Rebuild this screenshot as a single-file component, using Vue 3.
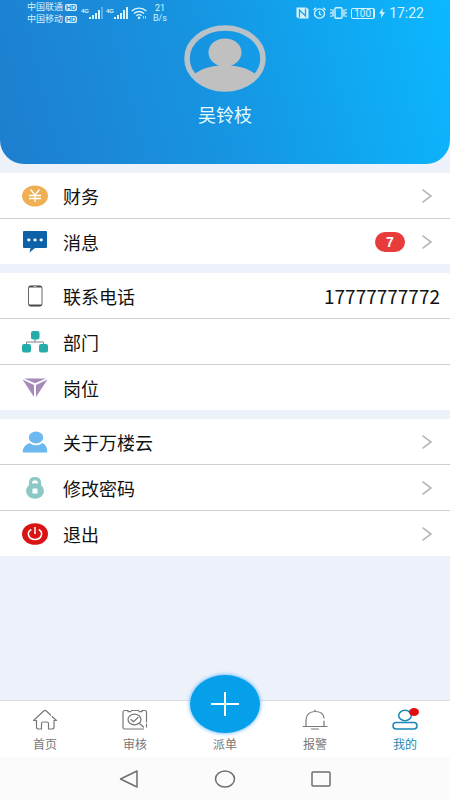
<script setup>
import { ref } from 'vue'

const carriers = ['中国联通', '中国移动']

const groups = [
  [
    { icon: 'money', label: '财务', link: true },
    { icon: 'message', label: '消息', link: true, badge: 7 },
  ],
  [
    { icon: 'phone', label: '联系电话', value: '17777777772' },
    { icon: 'department', label: '部门' },
    { icon: 'post', label: '岗位' },
  ],
  [
    { icon: 'about', label: '关于万楼云', link: true },
    { icon: 'lock', label: '修改密码', link: true },
    { icon: 'power', label: '退出', link: true },
  ],
]

const tabs = [
  { id: 'home', label: '首页' },
  { id: 'audit', label: '审核' },
  { id: 'dispatch', label: '派单' },
  { id: 'alarm', label: '报警' },
  { id: 'mine', label: '我的' },
]

const active = ref('mine')
</script>

<template>
  <div class="page">
    <header class="hero">
      <div class="status">
        <div class="carriers">
          <div v-for="name in carriers" :key="name" class="carrier">
            <span>{{ name }}</span><b class="hd">HD</b>
          </div>
        </div>
        <div v-for="n in 2" :key="n" class="signal">
          <span class="net">4G</span>
          <svg width="14" height="12" viewBox="0 0 14 12" fill="currentColor" aria-hidden="true">
            <path d="M0 10h2v2H0zM3 8h2v4H3zM6 6h2v6H6zM9 3h2v9H9z" />
            <path d="M12 0h2v12h-2z" :opacity="n === 1 ? 0.35 : 1" />
          </svg>
        </div>
        <svg class="wifi" width="16" height="12" viewBox="0 0 16 12" fill="none" stroke="currentColor" stroke-width="1.4" aria-hidden="true">
          <path d="M.7 4C4.800.2 11.200.2 15.300 4M3 6.500c2.900-2.600 7.100-2.600 10 0M5.300 8.800c1.600-1.400 3.800-1.400 5.400 0" />
          <circle cx="8" cy="10.800" r=".6" fill="currentColor" />
          <path d="M12.500 9v2.500M14.500 9v2.500" stroke-width=".8" />
        </svg>
        <div class="speed"><span>21</span><span>B/s</span></div>
        <div class="status-right">
          <svg width="13" height="12" viewBox="0 0 13 12" aria-hidden="true">
            <path d="M1.500.5H10L12.500 2v9.500H3L.5 10V.5z" fill="currentColor" />
            <path d="M3.500 10.500V3l6 6V1.500" fill="none" stroke="#19a2ec" stroke-width="1.300" />
          </svg>
          <svg width="13" height="12" viewBox="0 0 13 12" fill="none" stroke="currentColor" stroke-width="1.300" aria-hidden="true">
            <ellipse cx="6.500" cy="6.500" rx="5" ry="4.600" />
            <path d="M6.500 4v3l2 1M.5 3 3 .8M12.500 3 10 .8" />
          </svg>
          <svg width="17" height="12" viewBox="0 0 17 12" fill="none" stroke="currentColor" stroke-width="1.400" aria-hidden="true">
            <rect x="5" y=".8" width="7" height="10.400" rx="1" />
            <path d="M3 2.500v7M14 2.500v7" />
            <path d="M1 2v1.500M1 5v2M1 8.500V10M16 2v1.500M16 5v2M16 8.500V10" />
          </svg>
          <span class="battery">100</span>
          <svg width="6" height="10" viewBox="0 0 6 10" fill="currentColor" aria-hidden="true">
            <path d="M3.800 0 0 5.600h2.400L2 10l4-5.800H3.400z" />
          </svg>
          <time>17:22</time>
        </div>
      </div>
      <svg class="avatar" width="82" height="67" viewBox="0 0 82 67" aria-hidden="true">
        <ellipse cx="41" cy="33.500" rx="38" ry="30.500" fill="none" stroke="#b9c2c8" stroke-width="5.500" />
        <ellipse cx="41" cy="27.500" rx="16.500" ry="14" fill="#c0c0c0" />
        <path d="M35 36h12v4.500c11 1 19 4 25 9C66 60 54.500 66 41 66S16 60 10 49.500C16 44.500 24 41.500 35 40.500z" fill="#c0c0c0" />
      </svg>
      <h1 class="name">吴铃枝</h1>
    </header>

    <main class="groups">
      <section v-for="(rows, g) in groups" :key="g" class="group">
        <component
          :is="row.link ? 'button' : 'div'"
          v-for="row in rows"
          :key="row.label"
          :type="row.link ? 'button' : undefined"
          class="row"
        >
          <svg class="row-icon" width="26" height="22" viewBox="0 0 26 22" aria-hidden="true">
            <g v-if="row.icon === 'money'">
              <ellipse cx="13" cy="11" rx="13" ry="10.500" fill="#efb055" />
              <path d="M8.500 4.500 13 10l4.500-5.500M13 10v7M7 10.500h12M7 13.500h12" fill="none" stroke="#fff" stroke-width="1.300" />
            </g>
            <g v-else-if="row.icon === 'message'">
              <path d="M2 0h22q1 0 1 1v15q0 1-1 1H13l-5.500 4.500L8.500 17H2q-1 0-1-1V1q0-1 1-1z" fill="#0d61a9" />
              <g fill="#fff"><ellipse cx="6.800" cy="9" rx="1.700" ry="1.400" /><ellipse cx="13" cy="9" rx="1.700" ry="1.400" /><ellipse cx="19.200" cy="9" rx="1.700" ry="1.400" /></g>
            </g>
            <g v-else-if="row.icon === 'phone'">
              <rect x="6.500" y="1" width="13.500" height="20" rx="2" fill="#fff" stroke="#65666b" />
              <path d="M6.500 2.500Q6.500.800 8 .800h10.500Q20 .800 20 2.500zM6.500 19.500h13.500Q20 21.300 18 21.300H8.500q-2 0-2-1.800z" fill="#4c4d52" />
              <path d="M11.500 1.700h3" stroke="#ddd" stroke-width=".8" />
            </g>
            <g v-else-if="row.icon === 'department'">
              <path d="M13 8v3M4.500 14v-3h17v3" fill="none" stroke="#77888a" />
              <g fill="#25aca8"><rect x="9" y="0" width="8.500" height="8.500" rx="2" /><rect x="0" y="13" width="9" height="8.500" rx="2" /><rect x="17" y="13" width="9" height="8.500" rx="2" /></g>
            </g>
            <g v-else-if="row.icon === 'post'" fill="#a58abb">
              <path d="M2 1.500h22L13 6.200z" />
              <path d="M.5 2.500 12 8v12z" />
              <path d="M25.500 2.500 14 8v12z" />
            </g>
            <g v-else-if="row.icon === 'about'" fill="#6bb9ee">
              <ellipse cx="14" cy="6.500" rx="7.200" ry="6" />
              <path d="M.7 21.500c0-4 1.800-7.800 7-9.500 3.300 3 9.300 3 12.600 0 4.200 1.700 5 5.500 5 9.500z" />
            </g>
            <g v-else-if="row.icon === 'lock'">
              <path d="M8.500 9V6c0-3 1.800-4.300 4.500-4.300S17.500 3 17.500 6v3" fill="none" stroke="#8cc8c5" stroke-width="3.200" />
              <ellipse cx="13" cy="14" rx="9" ry="7.700" fill="#8cc8c5" />
              <path d="M11.500 11.500h3q1 0 1 1v4h-5v-4q0-1 1-1z" fill="#fff" />
            </g>
            <g v-else>
              <ellipse cx="13" cy="11" rx="13" ry="10.800" fill="#d91414" />
              <path d="M9.300 6.500C4 9.500 6.500 16.500 13 16.500S22 9.500 16.700 6.500M13 4v7" fill="none" stroke="#fff" stroke-width="1.500" />
            </g>
          </svg>
          <span class="label">{{ row.label }}</span>
          <span v-if="row.badge" class="badge">{{ row.badge }}</span>
          <span v-if="row.value" class="value">{{ row.value }}</span>
          <svg v-if="row.link" class="chevron" width="10" height="14" viewBox="0 0 10 14" fill="none" stroke="#b5b5b5" stroke-width="1.600" aria-hidden="true">
            <path d="M.5.700 9 7 .5 13.300" />
          </svg>
        </component>
      </section>
    </main>

    <nav class="tabs">
      <button
        v-for="tab in tabs"
        :key="tab.id"
        type="button"
        class="tab"
        :class="{ active: active === tab.id }"
        @click="active = tab.id"
      >
        <span v-if="tab.id === 'dispatch'" class="plus">
          <svg width="28" height="24" viewBox="0 0 28 24" stroke="#fff" stroke-width="2" aria-hidden="true">
            <path d="M0 12h28M14 0v24" />
          </svg>
        </span>
        <svg class="tab-icon" width="26" height="22" viewBox="0 0 26 22" fill="none" stroke="currentColor" stroke-width="1.200" stroke-linecap="round" stroke-linejoin="round" aria-hidden="true">
          <path v-if="tab.id === 'home'" d="M4.500 11.500H1.500L12 1.800q1-.8 2 0L18.500 6M20 7.500l4.500 4H22V18q0 2-2 2h-3.500v-5.500q0-1.500-1.500-1.500h-4q-1.500 0-1.500 1.500V20H6.500q-2 0-2-2V11.500" />
          <g v-else-if="tab.id === 'audit'">
            <path d="M6 1.500H2.500Q1 1.500 1 3v15.500Q1 20 2.500 20h19M6 1.500v1.200h3M9.500 1.500h7M20 1.500h3q1.500 0 1.500 1.500v10M20 1.500v1.200h-3M24.500 15v3" />
            <ellipse cx="12.500" cy="10.500" rx="6.500" ry="5.300" />
            <path d="m9 10.500 2.500 2.300L16 8.500M17.500 14.500l4 3.500" />
          </g>
          <g v-else-if="tab.id === 'alarm'">
            <path d="M1 17.500h24M4 17.500V11c0-5 3.500-8.500 9-8.500 5 0 8.500 2.500 9 6.500M22 12v5.500M13 1v1.500M9.500 20h7" />
          </g>
          <g v-else-if="tab.id === 'mine'" stroke-width="1.500">
            <ellipse cx="13" cy="6.500" rx="6.300" ry="5.200" />
            <rect x="1" y="13.500" width="24" height="6.500" rx="3.200" />
          </g>
        </svg>
        <span v-if="tab.id === 'mine'" class="dot"></span>
        <span class="tab-label">{{ tab.label }}</span>
      </button>
    </nav>

    <div class="system">
      <button type="button" aria-label="返回">
        <svg width="20" height="18" viewBox="0 0 20 18"><path d="M1.500 9 18 1v16z" /></svg>
      </button>
      <button type="button" aria-label="主屏幕">
        <svg width="22" height="18" viewBox="0 0 22 18"><ellipse cx="11" cy="9" rx="9.500" ry="8" /></svg>
      </button>
      <button type="button" aria-label="最近任务">
        <svg width="20" height="18" viewBox="0 0 20 18"><rect x="1" y="2" width="18" height="14" rx="1" /></svg>
      </button>
    </div>
  </div>
</template>

<style>
body {
  margin: 0;
}
</style>

<style scoped>
.page {
  display: flex;
  flex-direction: column;
  min-height: 100vh;
  background: #edf2fa;
  color: #111;
  font-family: "Noto Sans CJK SC", sans-serif;
}

button {
  margin: 0;
  padding: 0;
  border: 0;
  background: none;
  color: inherit;
  font: inherit;
}

svg {
  display: block;
  flex: none;
}

.hero {
  display: flex;
  flex-direction: column;
  align-items: center;
  box-sizing: border-box;
  height: 164px;
  border-radius: 0 0 24px 24px;
  background: linear-gradient(75deg, #1e7ecf 0%, #1793e0 45%, #0bb8ff 100%);
  color: #e6fbff;
}

.status {
  display: flex;
  align-items: center;
  align-self: stretch;
  box-sizing: border-box;
  height: 26px;
  padding: 0 26px 0 27px;
  color: #d5f3fb;
}

.carriers {
  width: 54px;
}

.carrier {
  display: flex;
  align-items: center;
  gap: 2px;
  font-size: 9px;
  line-height: 12px;
  white-space: nowrap;
}

.hd {
  padding: 0 1px;
  border-radius: 2px;
  background: #d5f3fb;
  color: #1f87d6;
  font: bold 7px/7px "Liberation Sans", sans-serif;
}

.signal {
  display: flex;
  width: 25px;
}

.net {
  font: bold 6px/8px "Liberation Sans", sans-serif;
}

.wifi {
  margin-right: 6px;
}

.speed {
  display: flex;
  flex-direction: column;
  align-items: center;
  font: 9px/10px Roboto, sans-serif;
}

.status-right {
  display: flex;
  align-items: center;
  gap: 4px;
  margin-left: auto;
}

.battery {
  padding: 0 2px;
  border: 1px solid currentColor;
  border-right-width: 2px;
  border-radius: 2px;
  font: 10px/9px Roboto, sans-serif;
}

time {
  font: 14px/16px Roboto, sans-serif;
}

.avatar {
  margin-top: -1px;
}

.name {
  margin: 10px 0 0;
  font-size: 18px;
  font-weight: 400;
  line-height: 24px;
}

.groups {
  display: flex;
  flex: 1;
  flex-direction: column;
  gap: 9px;
  padding: 9px 0 40px;
}

.group {
  background: #fff;
}

.row {
  display: flex;
  align-items: center;
  box-sizing: border-box;
  width: 100%;
  height: 45px;
  padding: 0 10px 0 22px;
  text-align: left;
}

.row + .row {
  height: 46px;
  border-top: 1px solid #cfcfcf;
}

.label {
  flex: 1;
  margin-left: 15px;
  font-size: 18px;
  line-height: 24px;
}

.badge {
  width: 30px;
  border-radius: 10px;
  background: #e83c3c;
  color: #fff;
  font: bold 14px/20px "Liberation Sans", sans-serif;
  text-align: center;
}

.value {
  font-size: 19px;
  line-height: 24px;
}

.chevron {
  margin: 0 8px 0 17px;
}

.tabs {
  display: grid;
  grid-template-columns: repeat(5, 1fr);
  height: 56px;
  border-top: 1px solid #dedede;
  background: #fff;
  color: #777;
}

.tab {
  position: relative;
  display: flex;
  flex-direction: column;
  align-items: center;
  padding-top: 8px;
}

.tab.active {
  color: #1a87b5;
}

.tab-label {
  margin-top: 5px;
  font-size: 12px;
  line-height: 16px;
}

.plus {
  position: absolute;
  top: -26px;
  left: 50%;
  display: grid;
  place-items: center;
  width: 70px;
  height: 58px;
  border-radius: 50%;
  background: #069fe9;
  box-shadow: 0 0 4px #4aa8ff;
  transform: translateX(-50%);
}

.dot {
  position: absolute;
  top: 7px;
  left: calc(50% + 4px);
  width: 10px;
  height: 8px;
  border-radius: 50%;
  background: #e01010;
}

.system {
  display: flex;
  align-items: center;
  justify-content: center;
  gap: 75px;
  height: 43px;
  background: #fbfbfb;
}

.system svg {
  fill: none;
  stroke: #6f6f6f;
  stroke-width: 1.5;
  stroke-linejoin: round;
}
</style>
